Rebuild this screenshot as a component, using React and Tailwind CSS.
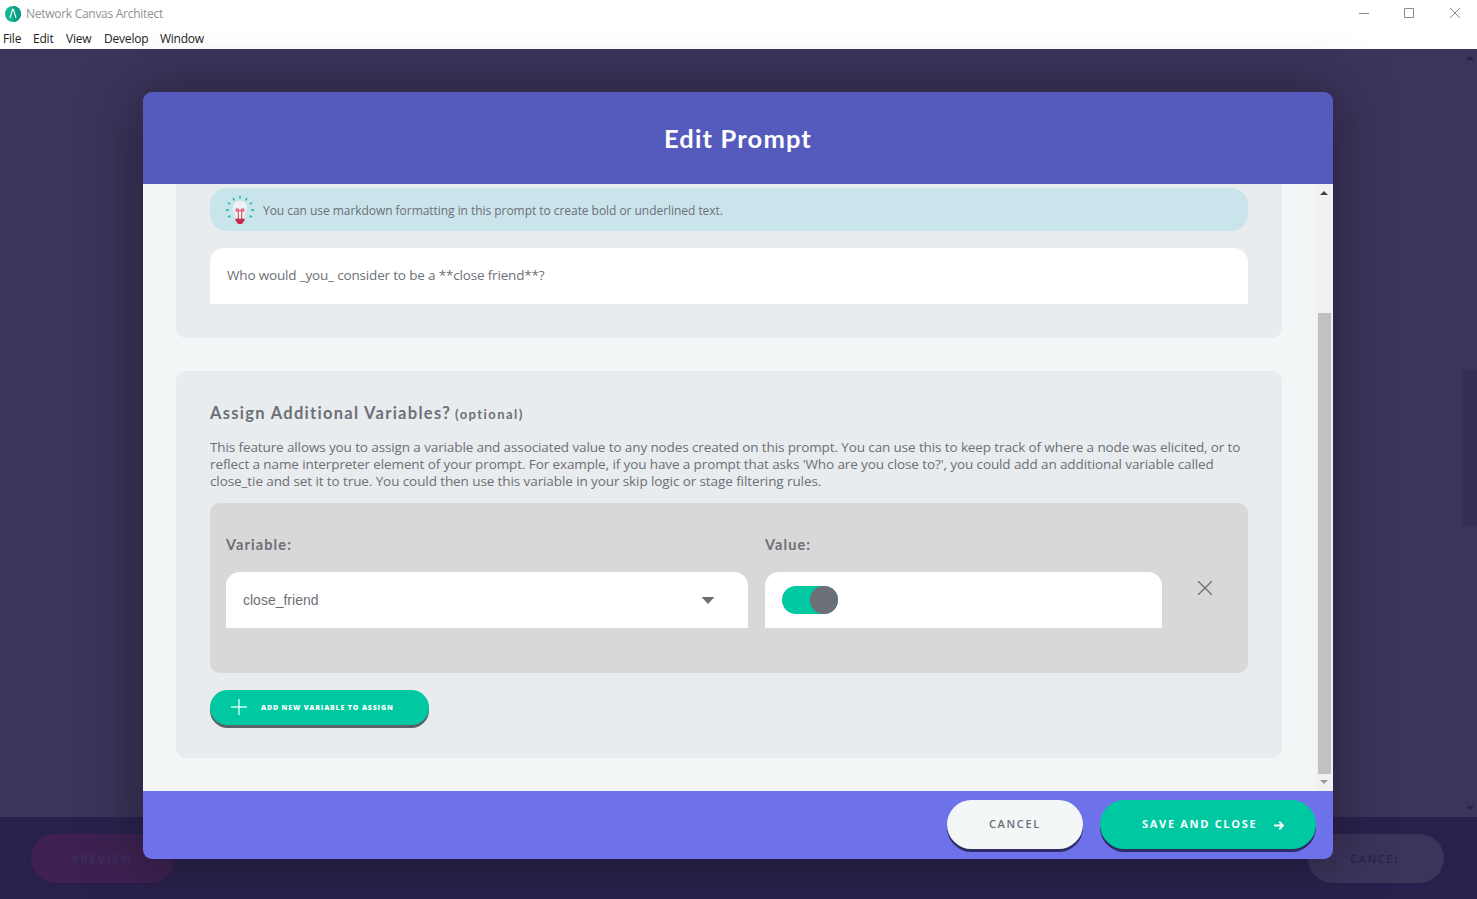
import React from "react";

function Logo() {
  return (
    <svg viewBox="0 0 16 16" className="h-4 w-4 shrink-0">
      <circle cx="8" cy="8" r="8" fill="#12b491" />
      <path d="M8 0a8 8 0 0 1 0 16z" fill="#0d9c85" />
      <path d="M7.600 3.200 5 12 M8.400 3.200l2.600 8.800" stroke="#e9fff8" strokeWidth="1.200" fill="none" />
      <path d="M7.300 2.800h1.400L8.500 5.500h-1z" fill="#e9fff8" />
    </svg>
  );
}

function Bulb() {
  return (
    <svg viewBox="0 0 28 28" className="h-7 w-7 shrink-0">
      <g stroke="#2fc5ac" strokeWidth="1.800">
        <path d="M14 0v2.800M7 2l1.300 2.400M21 2l-1.300 2.400M2 6.800l2.400 1.500M26 6.800l-2.400 1.500M0 14h2.800M25.200 14H28M2 21.300l2.400-1.500M26 21.300l-2.400-1.500" />
      </g>
      <path d="M14 4.800a7.200 7.200 0 0 0-7.200 7.200c0 4.200 3 5.500 3 10h8.400c0-4.500 3-5.800 3-10A7.200 7.200 0 0 0 14 4.800z" fill="#eff0f3" />
      <g fill="none" stroke="#d94a5e" strokeWidth="1.100">
        <circle cx="11.200" cy="14" r="1.300" />
        <circle cx="16.800" cy="14" r="1.300" />
        <path d="M12.300 14.500h3.400M12.300 14v9M15.700 14v9" />
      </g>
      <path d="M9.400 22.800h9.200v2l-1.600 1.200v1l-1.500 1h-3l-1.500-1v-1l-1.600-1.200z" fill="#c92c43" />
    </svg>
  );
}

function Arrow({ down, className }) {
  return (
    <svg viewBox="0 0 8 4" className={className}>
      <path d={down ? "M0 0h8L4 4z" : "M0 4h8L4 0z"} fill="currentColor" />
    </svg>
  );
}

function TitleBar() {
  return (
    <header className="h-[49px] bg-white font-['Open_Sans',sans-serif] text-[12px]">
      <div className="flex h-[27px] items-center pl-[5px] text-[#939393]">
        <Logo />
        <span className="ml-[5px] whitespace-nowrap tracking-[-0.28px]">Network Canvas Architect</span>
        <div className="ml-auto flex items-center pb-px pr-[17px]">
          <svg viewBox="0 0 10 10" className="h-[10px] w-[10px]" stroke="#8a8a8a"><path d="M0 5.500h10" /></svg>
          <svg viewBox="0 0 10 10" className="ml-[35px] h-[10px] w-[10px]" stroke="#8a8a8a" fill="none"><path d="M.5.5h9v9h-9z" /></svg>
          <svg viewBox="0 0 10 10" className="ml-[36px] h-[10px] w-[10px]" stroke="#8a8a8a"><path d="M0 0l10 10M10 0L0 10" /></svg>
        </div>
      </div>
      <nav className="flex h-[22px] items-center gap-[12px] whitespace-nowrap pl-[3px] pt-[2px] text-[#222]">
        <span className="w-[18px] tracking-[-0.2px]">File</span>
        <span className="w-[21px] tracking-[-0.2px]">Edit</span>
        <span className="w-[26px] tracking-[-0.2px]">View</span>
        <span className="w-[44px] tracking-[-0.2px]">Develop</span>
        <span className="w-[44px] tracking-[-0.25px]">Window</span>
      </nav>
    </header>
  );
}

function Backdrop() {
  return (
    <>
      <main className="flex h-[768px] justify-end bg-[#3c345b]">
        <div className="flex w-[14px] flex-col items-center pt-[7px] text-[#28204a]">
          <Arrow className="mr-px h-1 w-2" />
          <div className="mt-[310px] h-[156px] w-[14px] bg-[#362d57]" />
          <Arrow down className="mr-px mt-[280px] h-1 w-2" />
        </div>
      </main>
      <footer className="flex h-[82px] items-start justify-between bg-[#29214d] pl-[31px] pr-[33px] pt-[17px] font-['Open_Sans',sans-serif] text-[11px] font-bold">
        <div className="flex h-[49px] w-[144px] items-center rounded-full bg-[#3e2152] pl-[41px] pt-[2px] tracking-[1.9px] text-[#3a2f60] shadow-[0_2px_0_#271e49]">PREVIEW</div>
        <div className="flex h-[49px] w-[136px] items-center rounded-full bg-[#3c345b] pl-[42px] pt-[2px] font-semibold tracking-[1.6px] text-[#2c2549] shadow-[0_2px_0_#271e49]">CANCEL</div>
      </footer>
    </>
  );
}

function FieldLabel({ children }) {
  return (
    <div className="h-[69px] whitespace-nowrap pt-[32px] font-[Lato,sans-serif] text-[14.5px] font-bold leading-5 tracking-[1.1px] text-[#6d6f76]">
      {children}
    </div>
  );
}

function PromptSection() {
  return (
    <section className="h-[154px] rounded-b-[10px] bg-[#e8ecef] px-[34px] pt-[4px]">
      <div className="flex h-[43px] items-center rounded-[17px] bg-[#cae4ec] pl-[16px]">
        <Bulb />
        <span className="ml-[9px] whitespace-nowrap pt-[2px] font-['Open_Sans',sans-serif] text-[12px] tracking-[-0.045px] text-[#6d6f76]">
          You can use markdown formatting in this prompt to create bold or underlined text.
        </span>
      </div>
      <div className="mt-[17px] flex h-[56px] items-center whitespace-nowrap rounded-t-[14px] bg-white pb-[2px] pl-[17px] font-['Open_Sans',sans-serif] text-[13.5px] tracking-[-0.17px] text-[#6d6f76]">
        <span>Who would _you_ consider to be a **close friend**?</span>
      </div>
    </section>
  );
}

function VariablesSection() {
  return (
    <section className="mt-[33px] h-[387px] rounded-[10px] bg-[#e8ecef] px-[34px] pt-[30px] text-[#6d6f76]">
      <h2 className="flex h-6 items-baseline whitespace-nowrap font-[Lato,sans-serif] font-bold leading-6">
        <span className="w-[245px] text-[16.500px] tracking-[1.290px]">Assign Additional Variables?</span>
        <span className="text-[13px] tracking-[1.450px]">(optional)</span>
      </h2>
      <p className="mt-[14px] whitespace-nowrap font-['Open_Sans',sans-serif] text-[13.5px] leading-[17px]">
        <span className="block tracking-[-0.114px]">This feature allows you to assign a variable and associated value to any nodes created on this prompt. You can use this to keep track of where a node was elicited, or to</span>
        <span className="block tracking-[-0.108px]">reflect a name interpreter element of your prompt. For example, if you have a prompt that asks 'Who are you close to?', you could add an additional variable called</span>
        <span className="block tracking-[-0.095px]">close_tie and set it to true. You could then use this variable in your skip logic or stage filtering rules.</span>
      </p>
      <div className="mt-[13px] flex h-[170px] rounded-[10px] bg-[#d8d8d8] pl-[16px]">
        <div className="w-[522px]">
          <FieldLabel>Variable:</FieldLabel>
          <div className="flex h-[56px] items-center justify-between rounded-t-[14px] bg-white pl-[17px] pr-[33px] font-['Liberation_Sans',sans-serif] text-[14px]">
            <span>close_friend</span>
            <svg viewBox="0 0 14 7" className="h-[7px] w-[14px]"><path d="M.5 0h13L7 7z" fill="#6d6f76" /></svg>
          </div>
        </div>
        <div className="ml-[17px] w-[397px]">
          <FieldLabel>Value:</FieldLabel>
          <div className="flex h-[56px] items-center rounded-t-[14px] bg-white pl-[17px]">
            <div className="flex h-[28px] w-[56px] justify-end rounded-full bg-[#00c9a2]">
              <div className="h-[28px] w-[28px] rounded-full bg-[#6d6f76]" />
            </div>
          </div>
        </div>
        <svg viewBox="0 0 14 14" className="ml-[36px] mt-[78px] h-[14px] w-[14px]" stroke="#6d6f76" strokeWidth="1.300"><path d="M0 0l14 14M14 0L0 14" /></svg>
      </div>
      <button className="mt-[17px] flex h-[35px] w-[219px] items-center rounded-full bg-[#00c9a2] pl-[21px] text-white shadow-[0_3px_0_#5b6369]">
        <svg viewBox="0 0 16 16" className="mb-px h-4 w-4" stroke="#c9fff1" strokeWidth="1.500"><path d="M0 8h16M8 0v16" /></svg>
        <span className="ml-[14px] whitespace-nowrap pt-px font-['Open_Sans',sans-serif] text-[7px] font-extrabold tracking-[0.840px]">ADD NEW VARIABLE TO ASSIGN</span>
      </button>
    </section>
  );
}

function Modal() {
  return (
    <div className="absolute left-[143px] top-[92px] flex h-[767px] w-[1190px] flex-col overflow-hidden rounded-[9px] shadow-[0_4px_56px_rgba(25,20,35,0.68)]">
      <div className="flex h-[92px] shrink-0 items-center justify-center bg-[#555bbd] font-[Lato,sans-serif] text-[25.5px] font-bold tracking-[1.150px] text-white">
        <h1 className="whitespace-nowrap">Edit Prompt</h1>
      </div>
      <div className="flex h-[607px] shrink-0 bg-[#f2f6f7]">
        <div className="w-[1173px] pl-[33px] pr-[34px]">
          <PromptSection />
          <VariablesSection />
        </div>
        <div className="flex w-[17px] flex-col items-center bg-[#f1f1f1] pt-[7px]">
          <Arrow className="mr-px h-1 w-[8px] text-[#404040]" />
          <div className="mt-[118px] h-[461px] w-[13px] bg-[#c1c1c1]" />
          <Arrow down className="mr-px mt-[6px] h-1 w-[8px] text-[#979797]" />
        </div>
      </div>
      <div className="flex h-[68px] shrink-0 items-start justify-end gap-[17px] bg-[#6d72eb] pr-[17px] pt-[9px] font-['Open_Sans',sans-serif] text-[11px]">
        <button className="flex h-[49px] w-[136px] items-center rounded-full bg-[#f2f6f7] pl-[42px] font-semibold tracking-[1.650px] text-[#6d6f76] shadow-[0_3px_0_#2d2c69]">CANCEL</button>
        <button className="flex h-[49px] w-[216px] items-center rounded-full bg-[#00c9a2] pl-[42px] font-bold tracking-[1.700px] text-white shadow-[0_3px_0_#2d2c69]">
          <span className="w-[132px] whitespace-nowrap text-left">SAVE AND CLOSE</span>
          <svg viewBox="0 0 10 10" className="h-[10px] w-[10px]" fill="none" stroke="white" strokeWidth="1.800"><path d="M0 5.500h9M5.300 1.700L9 5.500 5.300 9.300" /></svg>
        </button>
      </div>
    </div>
  );
}

export default function App() {
  return (
    <div className="relative h-[899px] w-[1477px] overflow-hidden">
      <TitleBar />
      <Backdrop />
      <Modal />
    </div>
  );
}
